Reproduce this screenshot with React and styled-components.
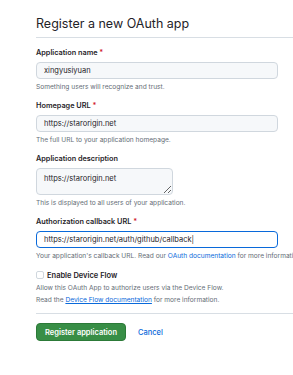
import React from 'react'
import styled, { createGlobalStyle } from 'styled-components'

const GlobalStyle = createGlobalStyle`
  html, body {
    margin: 0;
    padding: 0;
    background: #fff;
  }
  body {
    font-family: Inter, 'Liberation Sans', sans-serif;
    color: #1f2328;
    overflow: hidden;
  }
`;

const Page = styled.div`
  width: 293px;
  height: 375px;
  overflow: hidden;
  padding-left: 36px;
  box-sizing: border-box;
`;

const Form = styled.form`
  width: 330px;
`;

const Title = styled.h2`
  margin: 0;
  padding: 13px 0 3px;
  font-size: 12.5px;
  line-height: 21px;
  font-weight: 400;
  border-bottom: 1px solid #d8dee4;
  margin-bottom: 9px;
`;

const Group = styled.div`
  margin-bottom: 8px;
`;

const Label = styled.label`
  display: block;
  font-size: 7.3px;
  line-height: 12px;
  font-weight: 600;
  margin-bottom: 3px;
  white-space: nowrap;
`;

const Required = styled.span`
  color: #d1242f;
`;

const Input = styled.input`
  display: block;
  box-sizing: border-box;
  width: 242px;
  height: 17px;
  margin: 0;
  padding: 0 7px;
  font-family: inherit;
  font-size: 7.5px;
  color: #1f2328;
  background: ${p => (p.$focus ? '#fff' : '#f6f8fa')};
  border: ${p => (p.$focus ? '1.5px solid #0969da' : '1px solid #d0d7de')};
  border-radius: 4px;
  outline: none;
`;

const TextArea = styled.textarea`
  display: block;
  box-sizing: border-box;
  width: 137px;
  height: 27px;
  margin: 0;
  padding: 4px 7px;
  font-family: inherit;
  font-size: 7.5px;
  line-height: 11px;
  color: #1f2328;
  background: #f6f8fa;
  border: 1px solid #d0d7de;
  border-radius: 4px;
  resize: vertical;
  outline: none;
`;

const Hint = styled.p`
  margin: 3px 0 0;
  font-size: 6.6px;
  line-height: 10px;
  color: #656d76;
  white-space: nowrap;
`;

const Link = styled.a`
  color: #0969da;
  text-decoration: ${p => (p.$underline ? 'underline' : 'none')};
`;

const CheckRow = styled.div`
  display: flex;
  align-items: center;
  gap: 3px;
  height: 12px;
  margin-top: 8px;
`;

const Box = styled.span`
  width: 6px;
  height: 6px;
  border: 1px solid #d0d7de;
  border-radius: 2px;
  background: #fff;
`;

const CheckLabel = styled.span`
  font-size: 7.5px;
  font-weight: 600;
`;

const Note = styled.p`
  margin: 0;
  font-size: 6.6px;
  line-height: 11.5px;
  color: #656d76;
  white-space: nowrap;
`;

const Notes = styled.div`
  margin: 2px 0 0;
  padding-bottom: 7px;
  border-bottom: 1px solid #d8dee4;
`;

const Actions = styled.div`
  display: flex;
  align-items: center;
  gap: 12px;
  margin-top: 9px;
`;

const Button = styled.button`
  box-sizing: border-box;
  width: 90px;
  height: 18px;
  padding: 0;
  font-family: inherit;
  font-size: 7.5px;
  font-weight: 600;
  color: #fff;
  background: #388e46;
  border: 1px solid #2c7a38;
  border-radius: 4px;
`;

const Cancel = styled.a`
  font-size: 7.5px;
  font-weight: 500;
  color: #0969da;
`;

export default function App() {
  return (
    <Page>
      <GlobalStyle />
      <Form>
        <Title>Register a new OAuth app</Title>

        <Group>
          <Label>Application name <Required>*</Required></Label>
          <Input defaultValue="xingyusiyuan" />
          <Hint>Something users will recognize and trust.</Hint>
        </Group>

        <Group>
          <Label>Homepage URL <Required>*</Required></Label>
          <Input defaultValue="https://starorigin.net" />
          <Hint>The full URL to your application homepage.</Hint>
        </Group>

        <Group>
          <Label>Application description</Label>
          <TextArea defaultValue="https://starorigin.net" />
          <Hint>This is displayed to all users of your application.</Hint>
        </Group>

        <Group>
          <Label>Authorization callback URL <Required>*</Required></Label>
          <Input $focus defaultValue="https://starorigin.net/auth/github/callback|" />
          <Hint>
            Your application's callback URL. Read our <Link>OAuth documentation</Link> for more information.
          </Hint>
        </Group>

        <CheckRow>
          <Box />
          <CheckLabel>Enable Device Flow</CheckLabel>
        </CheckRow>
        <Notes>
          <Note>Allow this OAuth App to authorize users via the Device Flow.</Note>
          <Note>Read the <Link $underline>Device Flow documentation</Link> for more information.</Note>
        </Notes>

        <Actions>
          <Button type="button">Register application</Button>
          <Cancel>Cancel</Cancel>
        </Actions>
      </Form>
    </Page>
  )
}
